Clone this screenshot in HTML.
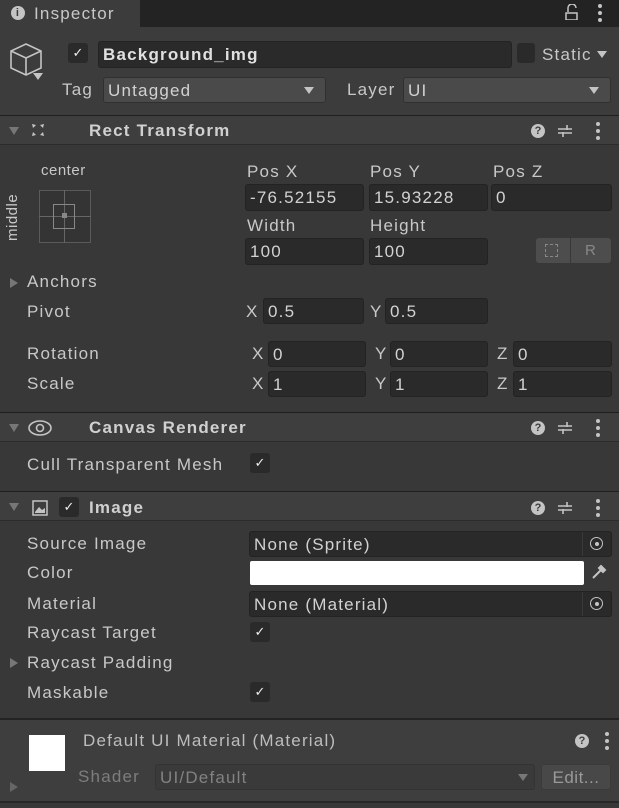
<!DOCTYPE html>
<html><head><style>
*{margin:0;padding:0;box-sizing:border-box}
body{width:619px;height:808px;background:#383838;font-family:"Liberation Sans",sans-serif;font-size:17px;letter-spacing:1.2px;color:#c8c8c8;position:relative;overflow:hidden}
.a{position:absolute;white-space:nowrap}
.f{position:absolute;background:#2a2a2a;border:1px solid #232323;border-radius:3px;padding-left:4px;line-height:25px;color:#d2d2d2}
.hdr{position:absolute;left:0;width:619px;height:30px;background:#3e3e3e;border-top:1px solid #1f1f1f;border-bottom:1px solid #2c2c2c}
.hdr b{position:absolute;left:89px;top:5px;font-weight:bold;color:#d0d0d0}
.tri{position:absolute;left:9px;top:11px;width:0;height:0;border-left:5px solid transparent;border-right:5px solid transparent;border-top:8px solid #777}
.rt{position:absolute;left:10px;width:0;height:0;border-top:5px solid transparent;border-bottom:5px solid transparent;border-left:8px solid #777}
.cb{position:absolute;width:20px;height:20px;background:#2a2a2a;border-radius:3px;color:#eee;font-size:13px;text-align:center;line-height:20px;letter-spacing:0}
.dots{position:absolute;width:4px}
.dots i{display:block;width:4px;height:4px;background:#c4c4c4;border-radius:2px;margin-bottom:3px}
.q{position:absolute;width:14px;height:14px;border-radius:7px;background:#c4c4c4;color:#3e3e3e;font-size:11px;font-weight:bold;text-align:center;line-height:14px;letter-spacing:0}
.dd{position:absolute;width:0;height:0;border-left:5px solid transparent;border-right:5px solid transparent;border-top:7px solid #c4c4c4}
.sl{position:absolute}
</style></head><body>
<div class="a" style="left:0;top:0;width:619px;height:27px;background:#232323"></div>
<div class="a" style="left:0;top:0;width:140px;height:28px;background:#3c3c3c"></div>
<div class="a" style="left:11px;top:6px;width:14px;height:14px;border-radius:7px;background:#c4c4c4;color:#3c3c3c;font-size:11px;font-weight:bold;text-align:center;line-height:14px">i</div>
<div class="a" style="left:34px;top:4px">Inspector</div>
<svg class="a" style="left:564px;top:4px" width="16" height="16"><path d="M4 8V4a4 4 0 0 1 8 0" fill="none" stroke="#c4c4c4" stroke-width="1.5"/><rect x="2" y="9" width="11" height="7" fill="none" stroke="#c4c4c4" stroke-width="1.5"/></svg>
<div class="dots" style="left:598px;top:4px"><i></i><i></i><i></i></div>
<div class="a" style="left:0;top:27px;width:619px;height:89px;background:#3c3c3c"></div>
<svg class="a" style="left:8px;top:42px" width="40" height="40"><path d="M18 2L33 9V26L18 33L3 26V9Z M3 9L18 16L33 9 M18 16V33" fill="none" stroke="#c4c4c4" stroke-width="1.6"/></svg>
<div class="dd" style="left:33px;top:73px"></div>
<div class="cb" style="left:68px;top:43px">✓</div>
<div class="f" style="left:98px;top:41px;width:414px;height:27px;font-weight:bold;color:#e0e0e0;line-height:26px">Background_img</div>
<div class="cb" style="left:517px;top:43px;width:18px"></div>
<div class="a" style="left:542px;top:45px">Static</div>
<div class="dd" style="left:597px;top:51px"></div>
<div class="a" style="left:62px;top:80px">Tag</div>
<div class="f" style="left:103px;top:77px;width:223px;height:26px;background:#4a4a4a;border-color:#303030">Untagged</div>
<div class="dd" style="left:304px;top:87px"></div>
<div class="a" style="left:347px;top:80px">Layer</div>
<div class="f" style="left:403px;top:77px;width:208px;height:26px;background:#4a4a4a;border-color:#303030">UI</div>
<div class="dd" style="left:589px;top:87px"></div>

<div class="hdr" style="top:115px"><div class="tri"></div><b>Rect Transform</b>
<svg class="a" style="left:30px;top:6px" width="16" height="16"><path d="M2 2L6 3L3 6Z M14 2L10 3L13 6Z M2 14L6 13L3 10Z M14 14L10 13L13 10Z" fill="#c4c4c4"/></svg>
<div class="q" style="left:531px;top:8px">?</div>
<svg class="sl" style="left:557px;top:7px" width="16" height="16"><path d="M1 6H15M1 10H15M10 2V7M6 9V14" stroke="#c4c4c4" stroke-width="1.6"/></svg>
<div class="dots" style="left:596px;top:6px"><i></i><i></i><i></i></div></div>

<div class="a" style="left:41px;top:162px;font-size:15px;letter-spacing:0.5px">center</div>
<div class="a" style="left:4px;top:241px;font-size:15px;letter-spacing:0.5px;transform:rotate(-90deg);transform-origin:left top">middle</div>
<div class="a" style="left:39px;top:190px;width:52px;height:53px;border:1px solid #5a5a5a;background:#343434"></div>
<div class="a" style="left:64px;top:190px;width:1px;height:53px;background:#666"></div>
<div class="a" style="left:39px;top:216px;width:52px;height:1px;background:#666"></div>
<div class="a" style="left:53px;top:204px;width:22px;height:25px;border:1px solid #888"></div>
<div class="a" style="left:62px;top:213px;width:5px;height:5px;background:#888"></div>
<div class="a" style="left:247px;top:162px">Pos X</div><div class="a" style="left:370px;top:162px">Pos Y</div><div class="a" style="left:493px;top:162px">Pos Z</div>
<div class="f" style="left:245px;top:184px;width:119px;height:27px">-76.52155</div>
<div class="f" style="left:369px;top:184px;width:119px;height:27px">15.93228</div>
<div class="f" style="left:491px;top:184px;width:121px;height:27px">0</div>
<div class="a" style="left:247px;top:216px">Width</div><div class="a" style="left:370px;top:216px">Height</div>
<div class="f" style="left:245px;top:238px;width:119px;height:27px">100</div>
<div class="f" style="left:369px;top:238px;width:119px;height:27px">100</div>
<div class="a" style="left:536px;top:238px;width:34px;height:25px;background:#4d4d4d;border-radius:3px 0 0 3px"></div>
<div class="a" style="left:545px;top:244px;width:13px;height:13px;border:1px dashed #888"></div>
<div class="a" style="left:571px;top:238px;width:40px;height:25px;background:#4d4d4d;border-radius:0 3px 3px 0;color:#888;text-align:center;line-height:25px;font-size:15px">R</div>
<div class="rt" style="top:278px"></div>
<div class="a" style="left:27px;top:272px">Anchors</div>
<div class="a" style="left:27px;top:302px">Pivot</div>
<div class="a" style="left:246px;top:302px">X</div><div class="f" style="left:263px;top:298px;width:101px;height:26px">0.5</div>
<div class="a" style="left:370px;top:302px">Y</div><div class="f" style="left:385px;top:298px;width:103px;height:26px">0.5</div>
<div class="a" style="left:27px;top:344px">Rotation</div>
<div class="a" style="left:27px;top:374px">Scale</div>
<div class="a" style="left:252px;top:344px">X</div><div class="f" style="left:268px;top:341px;width:98px;height:26px">0</div>
<div class="a" style="left:375px;top:344px">Y</div><div class="f" style="left:390px;top:341px;width:98px;height:26px">0</div>
<div class="a" style="left:497px;top:344px">Z</div><div class="f" style="left:513px;top:341px;width:99px;height:26px">0</div>
<div class="a" style="left:252px;top:374px">X</div><div class="f" style="left:268px;top:371px;width:98px;height:26px">1</div>
<div class="a" style="left:375px;top:374px">Y</div><div class="f" style="left:390px;top:371px;width:98px;height:26px">1</div>
<div class="a" style="left:497px;top:374px">Z</div><div class="f" style="left:513px;top:371px;width:99px;height:26px">1</div>

<div class="hdr" style="top:412px"><div class="tri"></div><b>Canvas Renderer</b>
<svg class="a" style="left:27px;top:5px" width="26" height="20"><ellipse cx="13" cy="10" rx="11" ry="7" fill="none" stroke="#c4c4c4" stroke-width="1.6"/><circle cx="13" cy="10" r="3.5" fill="none" stroke="#c4c4c4" stroke-width="1.6"/></svg>
<div class="q" style="left:531px;top:8px">?</div>
<svg class="sl" style="left:557px;top:7px" width="16" height="16"><path d="M1 6H15M1 10H15M10 2V7M6 9V14" stroke="#c4c4c4" stroke-width="1.6"/></svg>
<div class="dots" style="left:596px;top:6px"><i></i><i></i><i></i></div></div>
<div class="a" style="left:27px;top:455px">Cull Transparent Mesh</div>
<div class="cb" style="left:250px;top:453px">✓</div>

<div class="hdr" style="top:491px"><div class="tri"></div><b style="top:6px">Image</b>
<svg class="a" style="left:31px;top:7px" width="18" height="18"><rect x="2" y="2" width="14" height="14" fill="none" stroke="#c4c4c4" stroke-width="1.5"/><path d="M4 13L8 8L11 11L14 9V14H4Z" fill="#c4c4c4"/></svg>
<div class="cb" style="left:59px;top:5px">✓</div>
<div class="q" style="left:531px;top:9px">?</div>
<svg class="sl" style="left:557px;top:8px" width="16" height="16"><path d="M1 6H15M1 10H15M10 2V7M6 9V14" stroke="#c4c4c4" stroke-width="1.6"/></svg>
<div class="dots" style="left:596px;top:7px"><i></i><i></i><i></i></div></div>
<div class="a" style="left:27px;top:534px">Source Image</div>
<div class="f" style="left:249px;top:531px;width:363px;height:26px">None (Sprite)</div>
<div class="a" style="left:582px;top:532px;width:1px;height:24px;background:#3a3a3a"></div>
<div class="a" style="left:590px;top:537px;width:13px;height:13px;border:1.5px solid #c4c4c4;border-radius:7px"></div>
<div class="a" style="left:595px;top:542px;width:4px;height:4px;background:#c4c4c4;border-radius:2px"></div>
<div class="a" style="left:27px;top:563px">Color</div>
<div class="a" style="left:250px;top:561px;width:334px;height:24px;background:#fff;border-radius:2px"></div>
<svg class="a" style="left:590px;top:563px" width="18" height="18"><path d="M3 15L11 7M9 5L13 9M11 3L15 7L13 9L9 5Z" stroke="#c4c4c4" stroke-width="2" fill="#c4c4c4"/></svg>
<div class="a" style="left:27px;top:594px">Material</div>
<div class="f" style="left:249px;top:591px;width:363px;height:26px">None (Material)</div>
<div class="a" style="left:582px;top:592px;width:1px;height:24px;background:#3a3a3a"></div>
<div class="a" style="left:590px;top:597px;width:13px;height:13px;border:1.5px solid #c4c4c4;border-radius:7px"></div>
<div class="a" style="left:595px;top:602px;width:4px;height:4px;background:#c4c4c4;border-radius:2px"></div>
<div class="a" style="left:27px;top:623px">Raycast Target</div>
<div class="cb" style="left:250px;top:622px">✓</div>
<div class="rt" style="top:658px"></div>
<div class="a" style="left:27px;top:653px">Raycast Padding</div>
<div class="a" style="left:27px;top:683px">Maskable</div>
<div class="cb" style="left:250px;top:682px">✓</div>

<div class="a" style="left:0;top:718px;width:619px;height:85px;background:#3e3e3e;border-top:2px solid #232323;border-bottom:2px solid #282828"></div>
<div class="a" style="left:29px;top:735px;width:36px;height:36px;background:#fff"></div>
<div class="a" style="left:83px;top:731px;color:#bdbdbd">Default UI Material (Material)</div>
<div class="q" style="left:575px;top:734px">?</div>
<div class="dots" style="left:605px;top:732px"><i></i><i></i><i></i></div>
<div class="rt" style="top:782px;border-left-color:#666"></div>
<div class="a" style="left:78px;top:767px;color:#7d7d7d">Shader</div>
<div class="f" style="left:155px;top:764px;width:380px;height:26px;background:#3a3a3a;border-color:#343434;color:#828282">UI/Default</div>
<div class="dd" style="left:518px;top:774px;border-top-color:#777"></div>
<div class="f" style="left:541px;top:764px;width:70px;height:26px;background:#484848;border-color:#3a3a3a;color:#9a9a9a;text-align:center;padding:0;letter-spacing:0.5px">Edit...</div>
</body></html>
